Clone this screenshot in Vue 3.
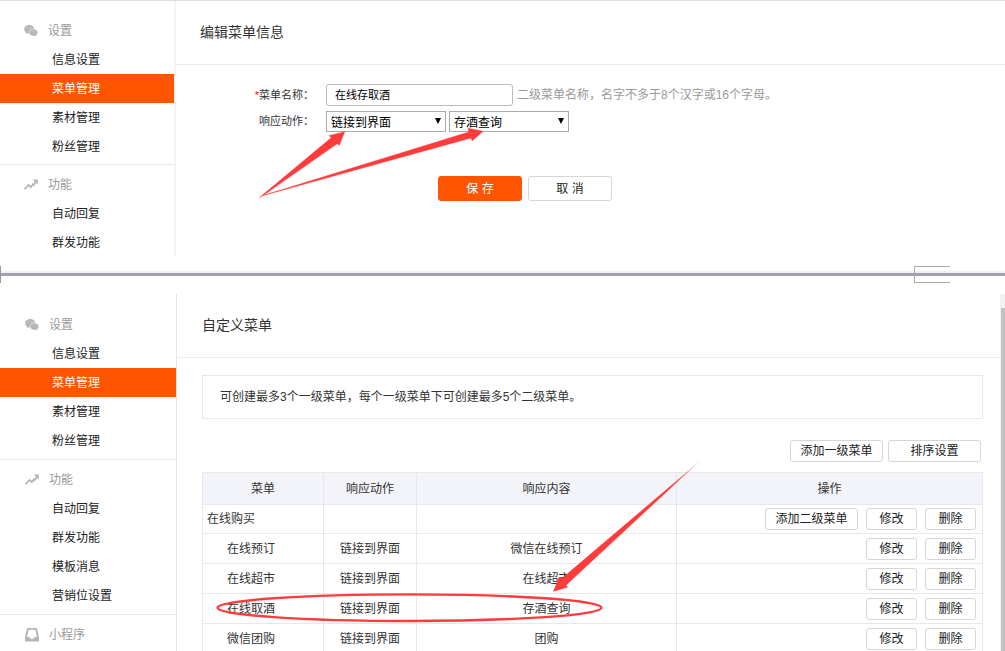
<script setup>
import { ref } from 'vue'

const settings = { icon: 'chat', title: '设置', items: ['信息设置', '菜单管理', '素材管理', '粉丝管理'] }

const panels = {
  edit: [settings, { icon: 'trend', title: '功能', items: ['自动回复', '群发功能'] }],
  list: [
    settings,
    { icon: 'trend', title: '功能', items: ['自动回复', '群发功能', '模板消息', '营销位设置'] },
    { icon: 'tray', title: '小程序', items: [] }
  ]
}
const active = '菜单管理'

const name = ref('在线存取酒')
const action = ref('链接到界面')
const target = ref('存酒查询')

const rows = [
  { name: '在线购买', action: '', content: '', parent: true },
  { name: '在线预订', action: '链接到界面', content: '微信在线预订' },
  { name: '在线超市', action: '链接到界面', content: '在线超市' },
  { name: '在线取酒', action: '链接到界面', content: '存酒查询' },
  { name: '微信团购', action: '链接到界面', content: '团购' }
]
</script>

<template>
  <div class="page">
    <section v-for="(groups, key) in panels" :key="key" class="panel" :class="key">
      <nav class="sidebar">
        <div v-for="g in groups" :key="g.title" class="group">
          <h2 class="group-title">
            <svg class="icon" viewBox="0 0 14 14" aria-hidden="true">
              <g v-if="g.icon === 'chat'">
                <path d="M5.2 1C2.400 1 .2 2.900.2 5.200c0 1.300.7 2.500 1.800 3.200L1.600 10l1.700-.8c.6.2 1.200.3 1.900.3 2.800 0 5-1.900 5-4.200S8 1 5.200 1z" />
                <path class="cut" d="M9.400 4.900c2.500 0 4.400 1.600 4.400 3.600 0 1.100-.6 2.100-1.600 2.800l.4 1.400-1.600-.8c-.5.1-1 .2-1.600.2-2.500 0-4.400-1.600-4.400-3.600s1.900-3.600 4.400-3.600z" />
                <g class="eyes">
                  <circle cx="3.600" cy="4" r=".5" /><circle cx="6.900" cy="4" r=".5" />
                  <circle cx="8" cy="7.500" r=".4" /><circle cx="10.800" cy="7.500" r=".4" />
                </g>
              </g>
              <g v-else-if="g.icon === 'trend'">
                <path class="line" d="M.6 11.200L4.600 7l2.200 2.200L8.800 6.400l.8.800L12 3.600" />
                <path d="M8.800 1.500H13.800V6.500z" />
              </g>
              <path v-else fill-rule="evenodd" d="M3 0h8l1 .7L14 9v4.500H0V9L2 .7zM3.600 1.700L2 9h2.600l1 2h2.800l1-2H12l-1.600-7.300z" />
            </svg>
            <span>{{ g.title }}</span>
          </h2>
          <a v-for="item in g.items" :key="item" href="#" class="item" :class="{ active: item === active }">{{ item }}</a>
        </div>
      </nav>

      <main v-if="key === 'edit'" class="content">
        <h1 class="title">编辑菜单信息</h1>
        <form class="form" @submit.prevent>
          <div class="field">
            <label for="name"><span class="required">*</span>菜单名称：</label>
            <input id="name" v-model="name" type="text" />
            <span class="hint">二级菜单名称，名字不多于8个汉字或16个字母。</span>
          </div>
          <div class="field">
            <label for="action">响应动作：</label>
            <span class="select">
              <select id="action" v-model="action"><option>链接到界面</option></select>
              <svg viewBox="0 0 6 6" aria-hidden="true"><path d="M0 0h6L3 6z" /></svg>
            </span>
            <span class="select">
              <select v-model="target" aria-label="响应内容"><option>存酒查询</option></select>
              <svg viewBox="0 0 6 6" aria-hidden="true"><path d="M0 0h6L3 6z" /></svg>
            </span>
          </div>
          <div class="form-actions">
            <button type="submit" class="btn large primary">保 存</button>
            <button type="button" class="btn large">取 消</button>
          </div>
        </form>
      </main>

      <main v-else class="content">
        <h1 class="title">自定义菜单</h1>
        <div class="body">
          <p class="notice">可创建最多3个一级菜单，每个一级菜单下可创建最多5个二级菜单。</p>
          <div class="toolbar">
            <button type="button" class="btn wide">添加一级菜单</button>
            <button type="button" class="btn wide">排序设置</button>
          </div>
          <table>
            <thead>
              <tr>
                <th class="c-name">菜单</th>
                <th class="c-action">响应动作</th>
                <th class="c-content">响应内容</th>
                <th>操作</th>
              </tr>
            </thead>
            <tbody>
              <tr v-for="r in rows" :key="r.name" :class="{ parent: r.parent }">
                <td class="name">{{ r.name }}</td>
                <td>{{ r.action }}</td>
                <td>{{ r.content }}</td>
                <td>
                  <div class="ops">
                    <button v-if="r.parent" type="button" class="btn wide">添加二级菜单</button>
                    <button type="button" class="btn small">修改</button>
                    <button type="button" class="btn small">删除</button>
                  </div>
                </td>
              </tr>
            </tbody>
          </table>
        </div>
      </main>

      <div v-if="key === 'edit'" class="divider"><i class="tick"></i><i class="bracket"></i></div>
      <div v-else class="scrollbar"><i class="thumb"></i></div>
    </section>

    <svg class="marks" width="1005" height="651" viewBox="0 0 1005 651" aria-hidden="true">
      <defs>
        <linearGradient id="fade" gradientUnits="userSpaceOnUse" x1="701" y1="460" x2="670" y2="487">
          <stop offset="0" stop-color="#ff3b3b" stop-opacity=".4" />
          <stop offset="1" stop-color="#ff3b3b" />
        </linearGradient>
      </defs>
      <path class="arrow" d="M259.500 197.500L331.500 137.500l-2.500-1.800 15.700-4-5.400 13.600-2.300-1.500-71 49.700z" />
      <path class="arrow" d="M263 195.500L469 132l-1-3.700 15 3-10.700 9.400-1.300-2.700z" />
      <path fill="url(#fade)" d="M701 460L561.500 578.500l-2.500-1.800-6 15 14.900-4.400-1.700-2z" />
      <ellipse cx="409.500" cy="607.700" rx="192" ry="13.300" />
    </svg>
  </div>
</template>

<style>
body {
  margin: 0;
  background: #fff;
}
</style>

<style scoped>
* {
  box-sizing: border-box;
}
.page {
  position: relative;
  display: flex;
  flex-direction: column;
  height: 100vh;
  overflow: hidden;
  font: 12px/18px "Liberation Sans", "Noto Sans CJK SC", sans-serif;
  color: #333;
}
.panel {
  display: flex;
}
.edit {
  flex-wrap: wrap;
  flex-shrink: 0;
  border-top: 1px solid #ddd;
}
.list {
  flex: 1;
  min-height: 0;
}
.sidebar {
  flex: none;
  width: 176px;
  border-right: 2px solid #f4f4f5;
}
.edit .sidebar {
  height: 255px;
  padding-top: 10px;
  overflow: hidden;
}
.list .sidebar {
  width: 177px;
  padding-top: 11px;
  border-right: 1px solid #e4e4ea;
}
.group {
  padding: 5px 0 4px;
  border-bottom: 1px solid #e9e9ea;
}
.edit .group {
  padding-bottom: 3px;
}
.group:last-child {
  border-bottom: 0;
}
.group-title {
  display: flex;
  align-items: center;
  gap: 10px;
  height: 29px;
  margin: 0;
  padding-left: 24px;
  font-size: 12px;
  font-weight: 400;
  color: #999;
}
.list .group-title {
  padding-left: 25px;
}
.icon {
  width: 14px;
  height: 14px;
  fill: #b5b5b5;
}
.icon .cut {
  stroke: #fff;
  stroke-width: 0.5;
}
.icon .eyes {
  fill: #eee;
}
.icon .line {
  fill: none;
  stroke: #b5b5b5;
  stroke-width: 1.8;
}
.item {
  display: block;
  height: 29px;
  padding-left: 52px;
  line-height: 31px;
  color: #222;
  text-decoration: none;
}
.item.active {
  background: #ff5500;
  color: #fff;
}
.content {
  flex: 1;
  min-width: 0;
}
.title {
  height: 64px;
  margin: 0;
  padding-left: 24px;
  border-bottom: 1px solid #ececec;
  font-size: 14px;
  font-weight: 400;
  line-height: 63px;
}
.list .title {
  padding-left: 25px;
}
.form {
  padding: 19px 0 0 64px;
}
.field {
  display: flex;
  align-items: center;
  height: 22px;
  margin-bottom: 4px;
}
.field label {
  width: 86px;
  padding-right: 12px;
  font-size: 11px;
  text-align: right;
  white-space: nowrap;
}
.required {
  color: #f00;
}
.field input {
  width: 187px;
  height: 22px;
  padding: 0 8px 2px;
  border: 1px solid #bbb;
  border-radius: 3px;
  font: inherit;
  font-size: 11px;
  color: #000;
}
.hint {
  margin-left: 4px;
  color: #999;
}
.select {
  position: relative;
  margin-right: 3px;
}
.select select {
  display: block;
  width: 120px;
  height: 21px;
  padding: 2px 4px 0;
  border: 1px solid #aaa;
  border-radius: 0;
  background: #fff;
  font: inherit;
  color: #000;
  appearance: none;
}
.select svg {
  position: absolute;
  top: 7px;
  right: 5px;
  width: 6px;
  height: 6px;
}
.form-actions {
  display: flex;
  gap: 6px;
  margin: 44px 0 0 198px;
}
.btn {
  height: 22px;
  padding: 0;
  border: 1px solid #d6d6d6;
  border-radius: 3px;
  background: #fff;
  font: inherit;
  color: #222;
  white-space: nowrap;
}
.btn.large {
  width: 84px;
  height: 25px;
}
.btn.primary {
  border-color: #ff5500;
  background: #ff5500;
  color: #fff;
}
.btn.wide {
  width: 93px;
}
.btn.small {
  width: 51px;
}
.divider {
  position: relative;
  width: 100%;
  height: 3px;
  margin: 17px 0 18px;
  background: #a2a2aa;
  box-shadow: 0 -2px 2px #eee;
}
.tick,
.bracket {
  position: absolute;
  top: -7px;
  left: 0;
  height: 17px;
  border-left: 1px solid #999;
}
.bracket {
  right: 55px;
  left: auto;
  width: 36px;
  border: 1px solid #aaa;
  border-right: 0;
}
.body {
  padding: 17px 17px 0 25px;
}
.notice {
  margin: 0;
  padding: 12px 17px;
  border: 1px solid #e8e8e8;
}
.toolbar {
  display: flex;
  justify-content: flex-end;
  gap: 5px;
  margin: 21px 2px 10px;
}
table {
  width: 100%;
  border-collapse: collapse;
  table-layout: fixed;
}
th,
td {
  height: 30px;
  padding: 0;
  border: 1px solid #e8e8ea;
  font-weight: 400;
  text-align: center;
}
th {
  height: 32px;
  background: #f3f4f9;
}
.parent td {
  height: 29px;
}
.name {
  padding-left: 24px;
  text-align: left;
}
.parent .name {
  padding-left: 4px;
}
.c-name {
  width: 121px;
}
.c-action {
  width: 93px;
}
.c-content {
  width: 260px;
}
.ops {
  display: flex;
  justify-content: flex-end;
  gap: 8px;
  padding-right: 6px;
}
.scrollbar {
  flex: none;
  width: 5px;
  padding: 14px 0 0 1px;
  background: #f1f1f1;
}
.thumb {
  display: block;
  height: 100%;
  background: #c1c1c1;
}
.marks {
  position: absolute;
  top: 0;
  left: 0;
  fill: #ff3b3b;
  pointer-events: none;
}
.marks .arrow {
  stroke: #ff3b3b;
  stroke-width: 0.5;
}
.marks ellipse {
  fill: none;
  stroke: #ff3b3b;
  stroke-width: 2.4;
}
</style>
